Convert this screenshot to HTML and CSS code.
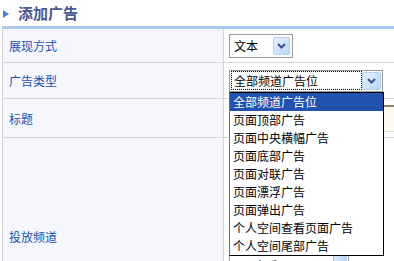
FILE: index.html
```html
<!DOCTYPE html>
<html lang="zh-CN">
<head>
    <meta charset="UTF-8">
    <title>添加广告</title>
    <link rel="stylesheet" href="styles.css">
</head>
<body>
    <div class="page-title"><span class="arrow"></span>添加广告</div>
    <table class="form">
        <tr class="row-type">
            <th>展现方式</th>
            <td>
                <div class="select select-small">
                    <span class="value">文本</span>
                    <span class="drop-btn"><svg width="9" height="6" viewBox="0 0 9 6"><path d="M1 1 L4.5 4.5 L8 1" fill="none" stroke="#3d4f8c" stroke-width="2"/></svg></span>
                </div>
            </td>
        </tr>
        <tr class="row-kind">
            <th>广告类型</th>
            <td>
                <div class="combo">
                    <div class="select select-wide">
                        <span class="value focus">全部频道广告位</span>
                        <span class="drop-btn"><svg width="9" height="6" viewBox="0 0 9 6"><path d="M1 1 L4.5 4.5 L8 1" fill="none" stroke="#3d4f8c" stroke-width="2"/></svg></span>
                    </div>
                    <!-- раскрытый список -->
                    <ul class="options">
                        <li class="active">全部频道广告位</li>
                        <li>页面顶部广告</li>
                        <li>页面中央横幅广告</li>
                        <li>页面底部广告</li>
                        <li>页面对联广告</li>
                        <li>页面漂浮广告</li>
                        <li>页面弹出广告</li>
                        <li>个人空间查看页面广告</li>
                        <li>个人空间尾部广告</li>
                    </ul>
                </div>
            </td>
        </tr>
        <tr class="row-title">
            <th>标题</th>
            <td><div class="text-input"></div></td>
        </tr>
        <tr class="row-channel">
            <th>投放频道</th>
            <td>
                <div class="listbox">
                    <div class="items">
                        <div class="item">音乐</div>
                        <div class="item">充值</div>
                    </div>
                    <div class="scrollbar"></div>
                </div>
            </td>
        </tr>
    </table>
</body>
</html>
```

FILE: styles.css
```css
body {
    margin: 0;
    background-color: #fff;
    font-family: "Noto Sans CJK SC", "DejaVu Sans", sans-serif;
    font-size: 12px;
    overflow: hidden;
}
.page-title {
    display: flex;
    align-items: center;
    height: 26px;
    padding-left: 3px;
    font-size: 15px;
    font-weight: bold;
    color: #4a5891;
    line-height: 20px;
}
.arrow {
    width: 0;
    height: 0;
    border-top: 4px solid transparent;
    border-bottom: 4px solid transparent;
    border-left: 6px solid #4c7fd6;
    margin-right: 9px;
    margin-top: 2px;
}
.form {
    border-collapse: collapse;
    margin-left: 2px;
    border-top: 3px solid #a9c9ef;
    border-left: 1px solid #d4d4d4;
}
.form th {
    width: 208px;
    min-width: 208px;
    padding: 0 6px;
    text-align: left;
    font-weight: normal;
    color: #1d4fb3;
    background-color: #f5f7fd;
    border-right: 1px solid #d6d6d6;
    border-bottom: 1px solid #d6d6d6;
    vertical-align: middle;
}
.form td {
    width: 260px;
    padding: 0 0 0 5px;
    background-color: #fff;
    border-bottom: 1px solid #d6d6d6;
    vertical-align: middle;
}
.row-type th, .row-type td { height: 33px; }
.row-kind th, .row-kind td { height: 35px; }
.row-title th, .row-title td { height: 38px; }
.row-channel th, .row-channel td { height: 196px; }

.select {
    display: flex;
    align-items: center;
    box-sizing: border-box;
    border: 1px solid #9a9a9a;
    background-color: #fff;
    color: #000;
}
.select-small {
    width: 64px;
    height: 24px;
    padding: 0 2px 0 4px;
}
.select-wide {
    width: 154px;
    height: 22px;
    padding: 1px 1px 1px 2px;
}
.select .value {
    flex: 1;
    line-height: 16px;
    white-space: nowrap;
}
.select .value.focus {
    outline: 1px dotted #000;
    outline-offset: 0;
    padding-left: 2px;
    margin-right: 1px;
    line-height: 17px;
}
.drop-btn {
    display: flex;
    align-items: center;
    justify-content: center;
    width: 17px;
    height: 18px;
    box-sizing: border-box;
    border: 1px solid #b5cfee;
    border-radius: 2px;
    background: linear-gradient(135deg, #e6f1fd, #b9d5f6);
}
.select-wide .drop-btn {
    width: 19px;
    height: 18px;
}
.combo {
    position: relative;
    width: 154px;
}
.options {
    position: absolute;
    left: 0;
    top: 22px;
    width: 153px;
    margin: 0;
    padding: 0;
    list-style: none;
    background-color: #fff;
    border: 1px solid #000;
    border-left-color: #6e6e6e;
    z-index: 10;
}
.options li {
    height: 18px;
    line-height: 18px;
    padding-left: 3px;
    color: #000;
    white-space: nowrap;
}
.options li.active {
    background-color: #2152b0;
    color: #fff;
}
.text-input {
    width: 250px;
    height: 27px;
    box-sizing: border-box;
    border-top: 2px solid #8a8a6e;
    border-left: 2px solid #8a8a6e;
    border-right: 1px solid #ddd;
    border-bottom: 1px solid #ddd;
    background-color: #fffaf0;
}
.listbox {
    display: flex;
    width: 120px;
    height: 188px;
    box-sizing: border-box;
    border: 1px solid #a0a0a0;
    background-color: #fff;
    overflow: hidden;
}
.items {
    flex: 1;
    padding-top: 114px;
}
.item {
    height: 18px;
    line-height: 18px;
    padding-left: 24px;
    color: #000;
}
.scrollbar {
    width: 13px;
    margin: 1px;
    background: linear-gradient(90deg, #dcebfb, #b7d3f3);
    border-left: 1px solid #9fc0e8;
}
```
